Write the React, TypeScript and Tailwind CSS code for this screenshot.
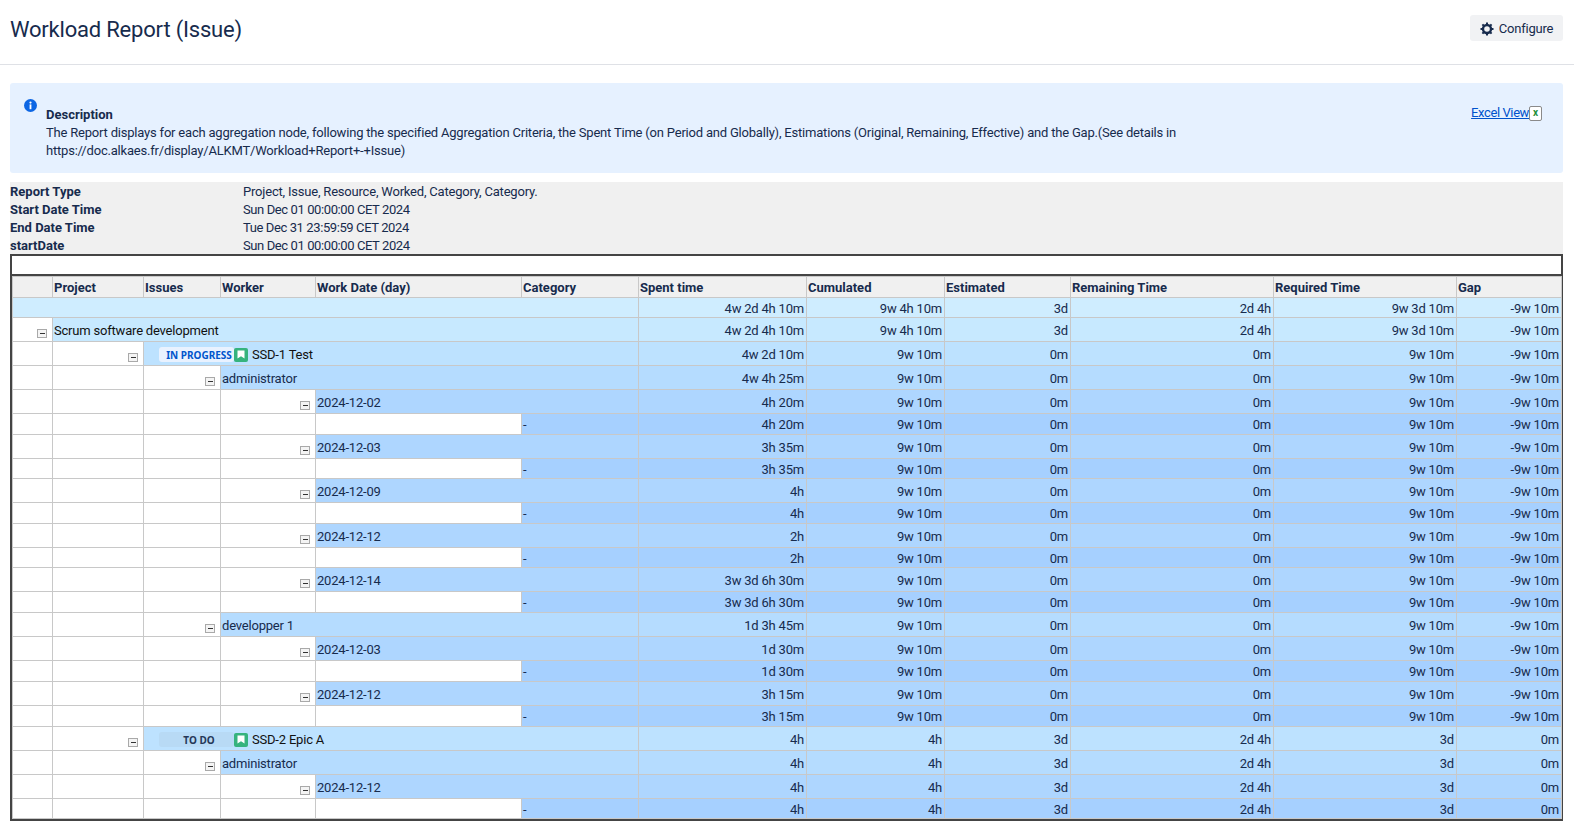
type Row = {
    level: number;
    label?: string;
    status?: "IN PROGRESS" | "TO DO";
    vals: string[];
    h: number;
};

const COLS = [40, 91, 77, 95, 206, 117, 168, 138, 126, 203, 183, 105];
const HEADERS = ["", "Project", "Issues", "Worker", "Work Date (day)", "Category", "Spent time", "Cumulated", "Estimated", "Remaining Time", "Required Time", "Gap"];

const NINE = ["9w 10m", "0m", "0m", "9w 10m", "-9w 10m"];
const FOUR = ["4h", "3d", "2d 4h", "3d", "0m"];

const ROWS: Row[] = [
    { level: 0, vals: ["4w 2d 4h 10m", "9w 4h 10m", "3d", "2d 4h", "9w 3d 10m", "-9w 10m"], h: 20 },
    { level: 1, label: "Scrum software development", vals: ["4w 2d 4h 10m", "9w 4h 10m", "3d", "2d 4h", "9w 3d 10m", "-9w 10m"], h: 24 },
    { level: 2, status: "IN PROGRESS", label: "SSD-1 Test", vals: ["4w 2d 10m", ...NINE], h: 24 },
    { level: 3, label: "administrator", vals: ["4w 4h 25m", ...NINE], h: 24 },
    { level: 4, label: "2024-12-02", vals: ["4h 20m", ...NINE], h: 24 },
    { level: 5, label: "-", vals: ["4h 20m", ...NINE], h: 21 },
    { level: 4, label: "2024-12-03", vals: ["3h 35m", ...NINE], h: 24 },
    { level: 5, label: "-", vals: ["3h 35m", ...NINE], h: 20 },
    { level: 4, label: "2024-12-09", vals: ["4h", ...NINE], h: 24 },
    { level: 5, label: "-", vals: ["4h", ...NINE], h: 21 },
    { level: 4, label: "2024-12-12", vals: ["2h", ...NINE], h: 24 },
    { level: 5, label: "-", vals: ["2h", ...NINE], h: 20 },
    { level: 4, label: "2024-12-14", vals: ["3w 3d 6h 30m", ...NINE], h: 24 },
    { level: 5, label: "-", vals: ["3w 3d 6h 30m", ...NINE], h: 21 },
    { level: 3, label: "developper 1", vals: ["1d 3h 45m", ...NINE], h: 24 },
    { level: 4, label: "2024-12-03", vals: ["1d 30m", ...NINE], h: 24 },
    { level: 5, label: "-", vals: ["1d 30m", ...NINE], h: 21 },
    { level: 4, label: "2024-12-12", vals: ["3h 15m", ...NINE], h: 24 },
    { level: 5, label: "-", vals: ["3h 15m", ...NINE], h: 21 },
    { level: 2, status: "TO DO", label: "SSD-2 Epic A", vals: ["4h", ...FOUR], h: 24 },
    { level: 3, label: "administrator", vals: ["4h", ...FOUR], h: 24 },
    { level: 4, label: "2024-12-12", vals: ["4h", ...FOUR], h: 24 },
    { level: 5, label: "-", vals: ["4h", ...FOUR], h: 20 },
];

const LEVEL_BG = ["bg-[#cfedff]", "bg-[#c7e9ff]", "bg-[#bde2ff]", "bg-[#b5dcff]", "bg-[#aed6ff]", "bg-[#a6d0ff]"];

const META = [
    ["Report Type", "Project, Issue, Resource, Worked, Category, Category."],
    ["Start Date Time", "Sun Dec 01 00:00:00 CET 2024"],
    ["End Date Time", "Tue Dec 31 23:59:59 CET 2024"],
    ["startDate", "Sun Dec 01 00:00:00 CET 2024"],
];

const cell = "border border-[#c8c8c8] p-0";
const textCell = "pt-[2px] leading-[16px]";

function Toggle() {
    return (
        <span className="inline-flex h-[9px] w-[10px] items-center justify-center border border-[#a9a9a9] bg-[#f4f4f4]">
            <span className="h-px w-[5px] bg-[#333]" />
        </span>
    );
}

function Story() {
    return (
        <span className="inline-flex h-[14px] w-[14px] shrink-0 items-center justify-center rounded-[2px] bg-[#36b37e]">
            <svg width="8" height="9" viewBox="0 0 8 9">
                <path d="M0.5 0.5h7v8L4 6.2 0.5 8.5z" fill="#fff" />
            </svg>
        </span>
    );
}

function Cog() {
    return (
        <svg width="14" height="14" viewBox="0 0 14 14" fill="none" stroke="#172b4d">
            <circle cx="7" cy="7" r="4" strokeWidth="2.4" />
            <path d="M7 0.5v2M7 11.5v2M0.5 7h2M11.5 7h2M2.4 2.4l1.4 1.4M10.2 10.2l1.4 1.4M2.4 11.6l1.4-1.4M10.2 3.8l1.4-1.4" strokeWidth="2" />
        </svg>
    );
}

function Lozenge({ status }: { status: string }) {
    const active = status === "IN PROGRESS";
    return (
        <span
            className={`inline-flex h-[15px] w-[75px] shrink-0 items-center justify-center rounded-[3px] pl-[5px] font-['Noto_Sans',sans-serif] text-[10px] font-bold tracking-normal ${
                active ? "bg-[#e9f2ff] text-[#0055cc]" : "bg-[#b8daf5] text-[#253858]"
            }`}
        >
            {status}
        </span>
    );
}

function ReportRow({ row }: { row: Row }) {
    const bg = LEVEL_BG[row.level];
    const labelCol = row.level;
    const blanks = Array.from({ length: Math.max(labelCol - 1, 0) });

    return (
        <tr style={{ height: row.h }}>
            {blanks.map((_, i) => (
                <td key={i} className={`${cell} bg-white`} />
            ))}
            {row.level > 0 && (
                <td className={`${cell} bg-white pr-[5px] pb-[3px] text-right align-bottom leading-none`}>
                    {row.level < 5 && <Toggle />}
                </td>
            )}
            <td colSpan={row.level === 0 ? 6 : 6 - labelCol} className={`${cell} ${bg} ${textCell} pl-px ${row.level < 3 ? "text-[#111]" : ""}`}>
                {row.status ? (
                    <span className="flex items-center pl-[14px]">
                        <Lozenge status={row.status} />
                        <Story />
                        <span className="ml-[4px] whitespace-nowrap">{row.label}</span>
                    </span>
                ) : (
                    <span className="whitespace-nowrap">{row.label}</span>
                )}
            </td>
            {row.vals.map((v, i) => (
                <td key={i} className={`${cell} ${bg} ${textCell} pr-[2px] text-right whitespace-nowrap`}>
                    {v}
                </td>
            ))}
        </tr>
    );
}

export default function App() {
    return (
        <div className="h-[838px] overflow-hidden bg-white font-['Roboto','Noto_Sans',sans-serif] text-[13px] leading-[18px] tracking-[-0.2px] text-[#172b4d]">
            {/* Header */}
            <header className="flex h-[65px] items-start justify-between border-b border-[#dfe1e6] pr-[11px] pl-[10px]">
                <h1 className="mt-[15px] text-[22px] leading-[30px] font-normal">Workload Report (Issue)</h1>
                <button className="mt-[15px] flex h-[26px] w-[93px] items-center justify-center gap-[5px] rounded-[3px] bg-[#f1f2f4] pt-px text-[13px]">
                    <Cog />
                    Configure
                </button>
            </header>

            <main className="pt-[18px] pr-[11px] pl-[10px]">
                {/* Info panel */}
                <section className="flex h-[90px] rounded-[3px] bg-[#e6f1ff]">
                    <svg className="mt-[16px] ml-[14px] shrink-0" width="13" height="13" viewBox="0 0 13 13">
                        <circle cx="6.5" cy="6.5" r="6.5" fill="#0c66e4" />
                        <rect x="5.6" y="5.4" width="1.8" height="4.8" fill="#fff" />
                        <circle cx="6.5" cy="3.6" r="1.1" fill="#fff" />
                    </svg>
                    <div className="mt-[23px] ml-[9px]">
                        <div className="font-bold tracking-normal">Description</div>
                        <p>
                            The Report displays for each aggregation node, following the specified Aggregation Criteria, the Spent Time (on Period and Globally), Estimations (Original, Remaining, Effective) and the Gap.(See details in
                            <br />
                            https://doc.alkaes.fr/display/ALKMT/Workload+Report+-+Issue)
                        </p>
                    </div>
                    <div className="mt-[21px] mr-[21px] ml-auto flex h-[18px] items-center">
                        <a href="#" className="tracking-[-0.4px] text-[#0052cc] underline">Excel View</a>
                        <span className="inline-flex h-[15px] w-[13px] items-center justify-center rounded-[2px] border border-[#8a8a8a] bg-white text-[10px] leading-none font-bold text-[#1f8f3a]">x</span>
                    </div>
                </section>

                {/* Report parameters */}
                <section className="mt-[9px] h-[72px] bg-[#f0f0f0] pt-px">
                    {META.map(([k, v], i) => (
                        <div key={k} className="flex h-[18px]">
                            <span className="w-[233px] font-bold tracking-normal">{k}</span>
                            <span className={i > 0 ? "tracking-[-0.4px]" : ""}>{v}</span>
                        </div>
                    ))}
                </section>

                {/* Report table */}
                <section className="w-[1553px] border-2 border-[#444]">
                    <div className="h-[20px] border-b-2 border-[#444] bg-white" />
                    <table className="w-[1549px] table-fixed border-collapse">
                        <colgroup>
                            {COLS.map((w, i) => (
                                <col key={i} style={{ width: w }} />
                            ))}
                        </colgroup>
                        <thead>
                            <tr className="h-[21px]">
                                {HEADERS.map((h, i) => (
                                    <th key={i} className={`${cell} ${textCell} bg-[#f0f0f0] pl-px text-left font-bold tracking-normal`}>
                                        {h}
                                    </th>
                                ))}
                            </tr>
                        </thead>
                        <tbody>
                            {ROWS.map((row, i) => (
                                <ReportRow key={i} row={row} />
                            ))}
                        </tbody>
                    </table>
                </section>
            </main>
        </div>
    );
}
